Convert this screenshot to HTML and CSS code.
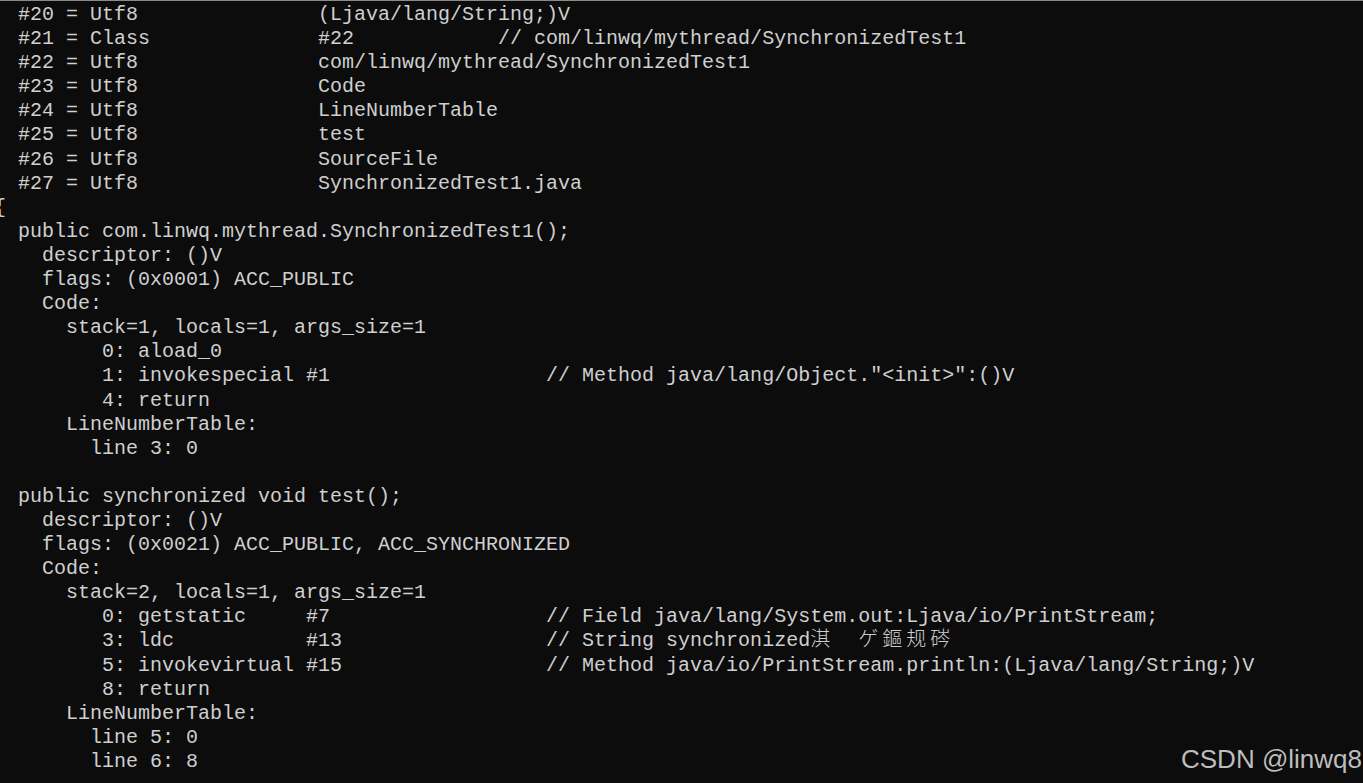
FILE: index.html
```html
<!DOCTYPE html>
<html lang="en">
<head>
<meta charset="utf-8">
<title>javap output</title>
<link rel="stylesheet" href="styles.css">
</head>
<body class="term">
<pre class="console">  #20 = Utf8               (Ljava/lang/String;)V
  #21 = Class              #22            // com/linwq/mythread/SynchronizedTest1
  #22 = Utf8               com/linwq/mythread/SynchronizedTest1
  #23 = Utf8               Code
  #24 = Utf8               LineNumberTable
  #25 = Utf8               test
  #26 = Utf8               SourceFile
  #27 = Utf8               SynchronizedTest1.java
{
  public com.linwq.mythread.SynchronizedTest1();
    descriptor: ()V
    flags: (0x0001) ACC_PUBLIC
    Code:
      stack=1, locals=1, args_size=1
         0: aload_0
         1: invokespecial #1                  // Method java/lang/Object."&lt;init&gt;":()V
         4: return
      LineNumberTable:
        line 3: 0

  public synchronized void test();
    descriptor: ()V
    flags: (0x0021) ACC_PUBLIC, ACC_SYNCHRONIZED
    Code:
      stack=2, locals=1, args_size=1
         0: getstatic     #7                  // Field java/lang/System.out:Ljava/io/PrintStream;
         3: ldc           #13                 // String synchronized<span class="cjk">淇</span>  <span class="cjk">ゲ鏂规硶</span>
         5: invokevirtual #15                 // Method java/io/PrintStream.println:(Ljava/lang/String;)V
         8: return
      LineNumberTable:
        line 5: 0
        line 6: 8</pre>
<div class="watermark">CSDN @linwq8</div>
</body>
</html>
```
FILE: styles.css
```css
html, body {
  margin: 0;
  padding: 0;
}

.term {
  position: relative;
  width: 1363px;
  height: 783px;
  overflow: hidden;
  background: #0c0c0c;
  border-top: 1px solid #8a8a8a;
  box-sizing: border-box;
}

.console {
  margin: 0 0 0 -6px;
  padding: 2px 0 0 0;
  font-family: "Liberation Mono", "Noto Sans CJK SC", monospace;
  font-size: 20px;
  line-height: 24.1px;
  color: #cfcfcf;
  white-space: pre;
}

.cjk {
  font-family: "Noto Sans CJK SC", sans-serif;
  font-size: 20px;
  line-height: 16px;
  letter-spacing: 4px;
  font-weight: 300;
}

.watermark {
  position: absolute;
  right: 1px;
  top: 745px;
  font-family: "Liberation Sans", Arial, sans-serif;
  font-size: 26px;
  line-height: 26px;
  color: #bdbdbd;
}
```
